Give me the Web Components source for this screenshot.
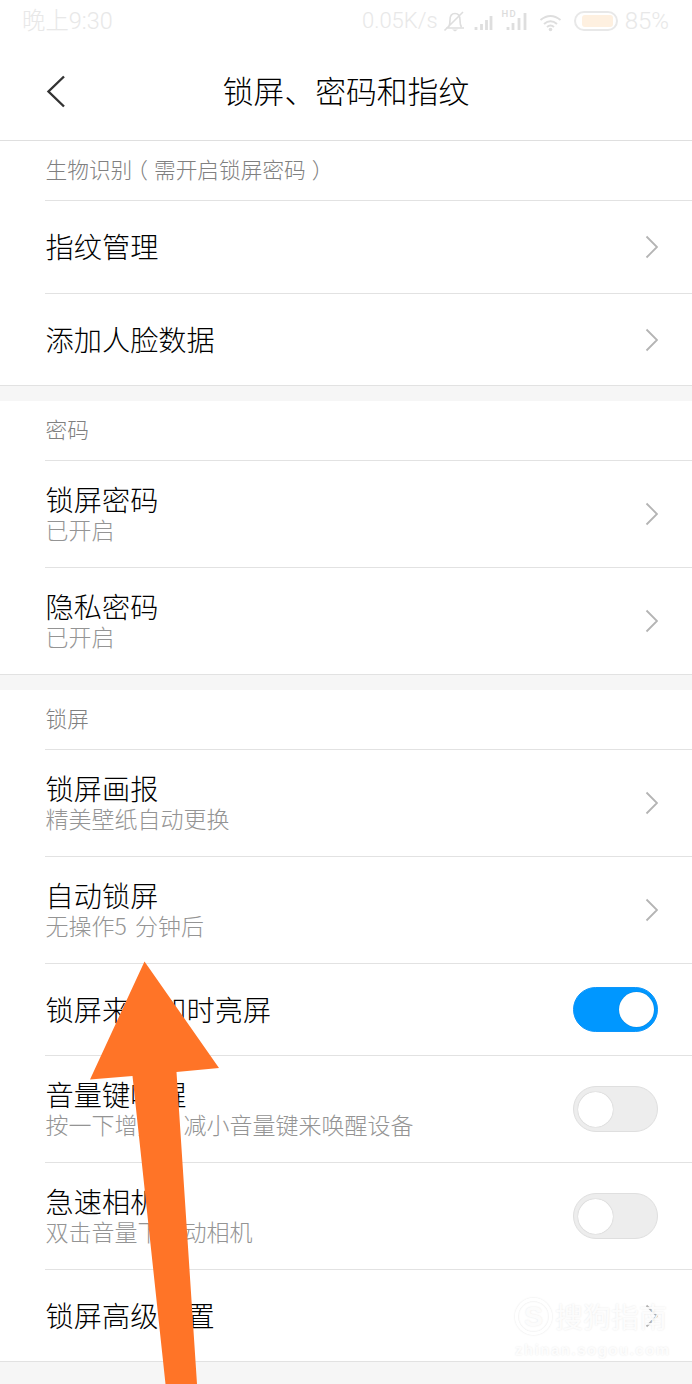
<!DOCTYPE html>
<html lang="zh-CN">
<head>
<meta charset="utf-8">
<title>锁屏、密码和指纹</title>
<style>
    html, body {
        margin: 0;
        height: 1384px;
        overflow: hidden;
        background: #f6f6f6;
    }

    body {
        position: relative;
        font-family: "Noto Sans CJK SC", sans-serif;
        font-weight: 300;
        color: #000;
    }
</style>
</head>
<body>

<status-bar time="晚上9:30" speed="0.05K/s" battery="85%"></status-bar>
<title-bar>锁屏、密码和指纹</title-bar>

<settings-group>
    <span slot="label">生物识别<span style="margin: 0 6px 0 -6px">（</span>需开启锁屏密码<span style="margin-left: 6px">）</span></span>
    <settings-row style="height: 93px">指纹管理</settings-row>
    <settings-row>添加人脸数据</settings-row>
</settings-group>

<settings-group>
    <span slot="label">密码</span>
    <settings-row>锁屏密码<span slot="summary">已开启</span></settings-row>
    <settings-row>隐私密码<span slot="summary">已开启</span></settings-row>
</settings-group>

<settings-group>
    <span slot="label">锁屏</span>
    <settings-row>锁屏画报<span slot="summary">精美壁纸自动更换</span></settings-row>
    <settings-row>自动锁屏<span slot="summary">无操作5 分钟后</span></settings-row>
    <settings-row>锁屏来通知时亮屏<toggle-switch slot="control" checked></toggle-switch></settings-row>
    <settings-row>音量键唤醒<span slot="summary">按一下增大、减小音量键来唤醒设备</span><toggle-switch slot="control"></toggle-switch></settings-row>
    <settings-row>急速相机<span slot="summary">双击音量下启动相机</span><toggle-switch slot="control"></toggle-switch></settings-row>
    <settings-row>锁屏高级设置</settings-row>
</settings-group>

<pointer-arrow></pointer-arrow>
<site-watermark name="搜狗指南" url="zhinan.sogou.com"></site-watermark>

<template id="status-bar">
    <style>
        :host {
            display: flex;
            align-items: center;
            box-sizing: border-box;
            height: 42px;
            padding: 0 23px 0 22px;
            background: #fff;
            color: #e8e8e8;
            font: 300 22px/42px Roboto, "Noto Sans CJK SC", sans-serif;
        }

        #time {
            font-size: 23.4px;
        }

        #speed {
            margin-left: auto;
        }

        #battery {
            font-size: 24px;
        }

        svg {
            margin: 0 7px 0 5px;
        }
    </style>
    <span id="time"></span>
    <span id="speed"></span>
    <svg width="175" height="34" viewBox="443 4 175 34" fill="none" stroke="#dedede" stroke-width="1.6">
        <path d="M446 28h18M448.500 27c1.500-2 1.500-4 1.500-7 0-4 2-6.500 5-6.500s5 2.500 5 6.500c0 3 0 5 1.500 7M444.500 30.500L463 12"/>
        <path d="M452 29.500h6l-3 2z" fill="#dedede" stroke="none"/>
        <path d="M476 30v-3M481.500 30v-6M486.500 30v-10M491 30v-14" stroke-width="2.800"/>
        <path d="M508 30v-3M513 30v-7M519 30v-12M525 30v-17" stroke-width="2.800"/>
        <text x="501.500" y="17" font-family="Roboto" font-size="9.500" font-weight="500" fill="#dcdcdc" stroke="none" letter-spacing="1.200">HD</text>
        <path d="M540.500 20q10-8 20 0M544 24q6.500-5.500 13 0M547 27q3.500-3 7 0" stroke-width="2"/>
        <circle cx="550.500" cy="29.500" r="1.800" fill="#dedede" stroke="none"/>
        <rect x="575" y="12" width="42" height="18" rx="9" stroke="#e8e8e8" stroke-width="2"/>
        <rect x="582" y="15" width="31" height="12" rx="3" fill="#fef0e0" stroke="none"/>
    </svg>
    <span id="battery"></span>
</template>

<template id="title-bar">
    <style>
        :host {
            display: grid;
            grid-template-columns: 100px 1fr 100px;
            align-items: center;
            height: 98px;
            border-bottom: 1px solid #dfdfdf;
            background: #fff;
            font-size: 30.8px;
            line-height: 46px;
            text-align: center;
        }

        svg {
            margin-left: 44px;
        }

        .text {
            padding-bottom: 2px;
        }
    </style>
    <svg width="24" height="34" fill="none" stroke="#333" stroke-width="2.400"><path d="M20 2.500L4.500 17.500L20 32.500"/></svg>
    <div class="text"><slot></slot></div>
</template>

<template id="settings-group">
    <style>
        :host {
            display: block;
            margin-bottom: 15px;
            background: #fff;
        }

        header {
            box-sizing: border-box;
            height: 60px;
            margin-left: 45px;
            padding-left: .5px;
            border-bottom: 1px solid #e2e2e2;
            color: #808080;
            font-size: 21.7px;
            line-height: 56px;
        }
    </style>
    <header><slot name="label"></slot></header>
    <slot></slot>
</template>

<template id="settings-row">
    <style>
        :host {
            display: flex;
            align-items: center;
            justify-content: space-between;
            box-sizing: border-box;
            height: 92px;
            margin-left: 45px;
            padding-right: 34px;
            border-bottom: 1px solid #e2e2e2;
        }

        :host(.tall) {
            height: 107px;
        }

        :host(:last-child) {
            margin-left: 0;
            padding-left: 45px;
        }

        .text {
            padding: 0 0 2px .6px;
        }

        .title {
            font-size: 28.2px;
            line-height: 32px;
        }

        .summary {
            color: #949494;
            font-size: 23px;
            line-height: 29px;
            word-spacing: 3px;
        }

        svg {
            display: block;
        }
    </style>
    <div class="text">
        <div class="title"><slot></slot></div>
        <div class="summary"><slot name="summary"></slot></div>
    </div>
    <slot name="control">
        <svg width="13" height="24" fill="none" stroke="#b4b4b4" stroke-width="1.800"><path d="M1.500 1.500L12 12L1.500 22.500"/></svg>
    </slot>
</template>

<template id="toggle-switch">
    <style>
        :host {
            display: flex;
            align-items: center;
            box-sizing: border-box;
            width: 85px;
            height: 46px;
            padding: 0 4px;
            border: 1px solid #dfdfdf;
            border-radius: 23px;
            background: #ededed;
        }

        :host([checked]) {
            justify-content: flex-end;
            height: 45px;
            padding: 0 3px;
            border-color: #0e96fb;
            background: #0097ff;
        }

        i {
            width: 35px;
            height: 35px;
            border-radius: 50%;
            background: #fff;
            box-shadow: 0 0 1px rgba(0, 0, 0, .3);
        }
    </style>
    <i></i>
</template>

<template id="pointer-arrow">
    <style>
        :host {
            position: absolute;
            left: 90px;
            top: 961px;
        }

        svg {
            display: block;
        }
    </style>
    <svg width="130" height="423" viewBox="90 961 130 423">
        <path fill="#ff7427" d="M144.500 961.500L219 1068L176.500 1072L197 1384H165.500L132.500 1076L90 1079.500z"/>
    </svg>
</template>

<template id="site-watermark">
    <style>
        :host {
            position: absolute;
            left: 515px;
            top: 1297px;
            width: 160px;
            color: rgba(255, 255, 255, .9);
            text-shadow: 0 0 2px rgba(0, 0, 0, .1);
        }

        .brand {
            display: flex;
            align-items: center;
            gap: 3px;
            height: 38px;
            font-size: 28px;
            font-weight: 400;
        }

        .logo {
            box-sizing: border-box;
            width: 37px;
            height: 37px;
            border: 3px solid #fff;
            border-radius: 50%;
            box-shadow: 0 0 2px rgba(0, 0, 0, .13), inset 0 0 2px rgba(0, 0, 0, .13);
            font: bold 28px/31px "Liberation Sans", sans-serif;
            text-align: center;
        }

        .url {
            font: bold 15px/30px "Liberation Sans", sans-serif;
            letter-spacing: 1.500px;
            white-space: nowrap;
        }
    </style>
    <div class="brand"><span class="logo">S</span><span id="name"></span></div>
    <div class="url" id="url"></div>
</template>

<script type="text/javascript">
    class BaseElement extends HTMLElement {

        constructor() {
            super();
            let template = document.querySelector('#' + this.localName).content.cloneNode(true);
            this.attachShadow({mode: 'open'}).appendChild(template);
        }

        /** Copies each attribute into the shadow node with the same id */
        connectedCallback() {
            for (let attr of this.attributes) {
                let node = this.shadowRoot.getElementById(attr.name);
                if (node) {
                    node.textContent = attr.value;
                }
            }
        }
    }

    class SettingsRow extends BaseElement {

        connectedCallback() {
            super.connectedCallback();
            // rows with a second line are taller
            this.classList.toggle('tall', !!this.querySelector('[slot=summary]'));
        }
    }

    window.customElements.define('status-bar', class extends BaseElement {});
    window.customElements.define('title-bar', class extends BaseElement {});
    window.customElements.define('settings-group', class extends BaseElement {});
    window.customElements.define('settings-row', SettingsRow);
    window.customElements.define('toggle-switch', class extends BaseElement {});
    window.customElements.define('pointer-arrow', class extends BaseElement {});
    window.customElements.define('site-watermark', class extends BaseElement {});
</script>
</body>
</html>
